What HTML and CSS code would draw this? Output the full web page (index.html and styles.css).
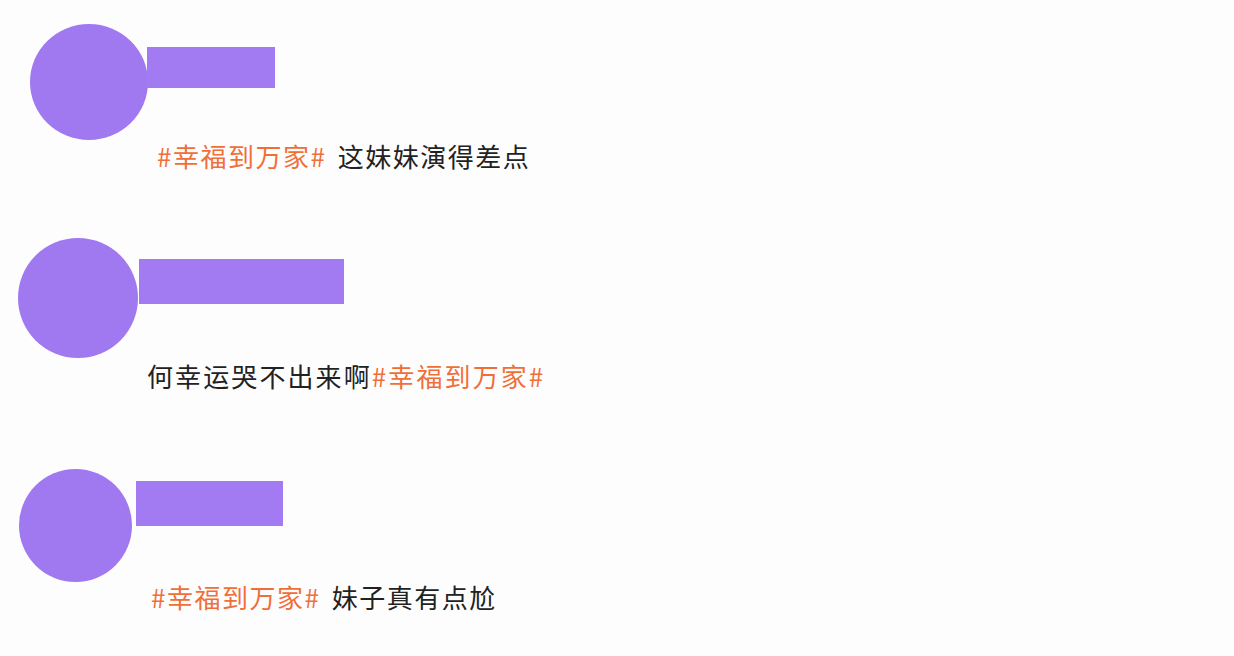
FILE: index.html
```html
<!DOCTYPE html>
<html lang="zh-CN">
<head>
 <meta charset="UTF-8">
 <meta name="viewport" content="width=device-width, initial-scale=1.0">
 <title>评论</title>
 <link rel="stylesheet" href="styles.css">
</head>
<body>
 <div class="feed">
   <div class="comment c1">
     <div class="head"><span class="avatar"></span><span class="name"></span></div>
     <p class="text"><span class="tag">#幸福到万家#</span> 这妹妹演得差点</p>
   </div>

   <div class="comment c2">
     <div class="head"><span class="avatar"></span><span class="name"></span></div>
     <p class="text">何幸运哭不出来啊<span class="tag">#幸福到万家#</span></p>
   </div>

   <div class="comment c3">
     <div class="head"><span class="avatar"></span><span class="name"></span></div>
     <p class="text"><span class="tag">#幸福到万家#</span> 妹子真有点尬</p>
   </div>
 </div>
</body>
</html>
```

FILE: styles.css
```css
body { margin: 0; background-color: #fdfdfe; font-family: "Noto Sans CJK SC", "Noto Sans", sans-serif; }
.feed { padding-top: 24px; border-top: 2px solid #f2f2f4; margin-top: -2px; }
.head { display: flex; align-items: flex-start; }
.avatar { flex: none; border-radius: 50%; background-color: #a078f0; }
.name { flex: none; background-color: #a27af2; }
.text { margin: 0; font-size: 26px; line-height: 30px; letter-spacing: 1.5px; word-spacing: 4px; color: #222; }
.tag { color: #f06f38; }

.c1 { padding-left: 30px; }
.c1 .avatar { width: 118px; height: 116px; }
.c1 .name { width: 128px; height: 41px; margin: 23px 0 0 -1px; }
.c1 .text { margin: 1px 0 0 127px; }

.c2 { margin-top: 67px; padding-left: 18px; }
.c2 .avatar { width: 120px; height: 120px; }
.c2 .name { width: 205px; height: 45px; margin: 21px 0 0 1px; }
.c2 .text { margin: 3px 0 0 129px; letter-spacing: 2.1px; }

.c3 { margin-top: 78px; padding-left: 19px; }
.c3 .avatar { width: 113px; height: 113px; }
.c3 .name { width: 147px; height: 45px; margin: 12px 0 0 4px; }
.c3 .text { margin: 0 0 0 132px; }
```
